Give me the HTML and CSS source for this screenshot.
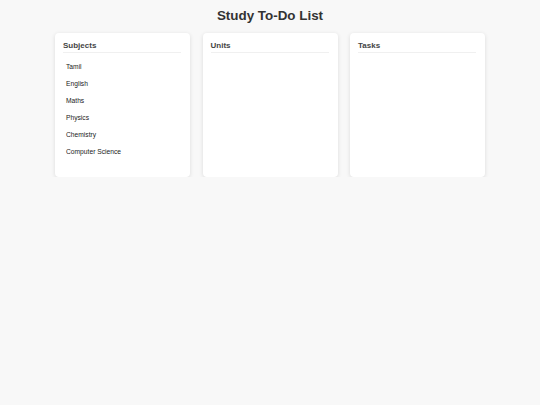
FILE: index.html
```html
<!DOCTYPE html>
<html lang="en">
<head>
	<meta charset="UTF-8">
	<meta name="viewport" content="width=device-width, initial-scale=1.0">
	<title>Study To-Do List</title>

	<link rel="stylesheet" href="styles.css">

</head>
<body>

	<h1 class="page-title">Study To-Do List</h1>

	<div class="board">

		<section class="column">
			<h2 class="column-title">Subjects</h2>
			<ul class="column-list">
				<li class="column-item">Tamil</li>
				<li class="column-item">English</li>
				<li class="column-item">Maths</li>
				<li class="column-item">Physics</li>
				<li class="column-item">Chemistry</li>
				<li class="column-item">Computer Science</li>
			</ul>
		</section>

		<section class="column">
			<h2 class="column-title">Units</h2>
			<ul class="column-list"></ul>
		</section>

		<section class="column">
			<h2 class="column-title">Tasks</h2>
			<ul class="column-list"></ul>
		</section>

	</div>

</body>
</html>
```

FILE: styles.css
```css
body {
	margin: 0;
	background-color: #f8f8f8;
	font-family: "Liberation Sans", Arial, sans-serif;
	color: #333;
}
.page-title {
	margin: 0;
	padding: 8px 0 9px;
	font-size: 13.4px;
	line-height: 16px;
	text-align: center;
	color: #333;
}
.board {
	display: grid;
	grid-template-columns: repeat(3, 135px);
	gap: 12.5px;
	justify-content: center;
}
.column {
	box-sizing: border-box;
	min-height: 144px;
	padding: 8px 9px 8px 8px;
	background-color: #ffffff;
	border-radius: 4px;
	box-shadow: 0 1px 4px rgba(0, 0, 0, 0.12);
}
.column-title {
	margin: 0;
	padding-bottom: 1px;
	font-size: 8px;
	line-height: 10px;
	color: #444;
	border-bottom: 1px solid #f0f0f0;
}
.column-list {
	list-style: none;
	margin: 5px 0 0;
	padding: 0;
}
.column-item {
	padding: 4px 3px;
	font-size: 6.7px;
	line-height: 9px;
	color: #222;
}
```
